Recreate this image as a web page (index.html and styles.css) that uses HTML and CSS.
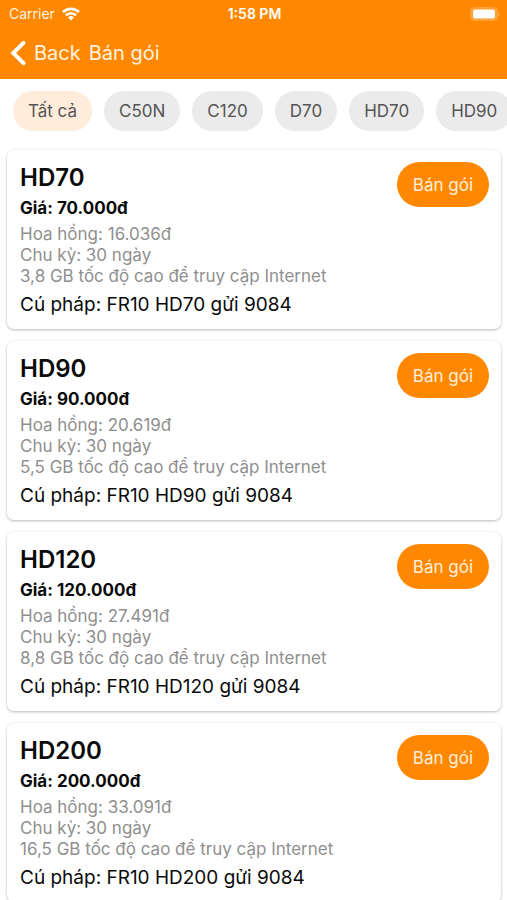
FILE: index.html
```html
<!DOCTYPE html>
<html lang="vi">
<head>
<meta charset="utf-8">
<meta name="viewport" content="width=device-width, initial-scale=1">
<title>Bán gói</title>
<link rel="stylesheet" href="styles.css">
</head>
<body>
<header class="header">
  <div class="status">
    <div class="carrier">
      <span>Carrier</span>
      <svg class="wifi" viewBox="0 0 18 14" aria-hidden="true">
        <path d="M1 5.200a11.300 11.300 0 0 1 16 0M3.900 8.300a7.200 7.200 0 0 1 10.200 0" fill="none" stroke="currentColor" stroke-width="2.6"/>
        <path d="M9 13.4 6.100 10.500a4.100 4.100 0 0 1 5.800 0z" fill="currentColor"/>
      </svg>
    </div>
    <time class="clock">1:58 PM</time>
    <svg class="battery" viewBox="0 0 30 14" aria-hidden="true">
      <rect x="0.5" y="0.5" width="27" height="13" rx="4" fill="#fff" fill-opacity="0.2" stroke="#fff" stroke-opacity="0.15"/>
      <rect x="3" y="2.500" width="22" height="9" rx="2" fill="#fff"/>
      <path d="M28.500 4.800c1.500.8 1.500 3.600 0 4.400z" fill="#fff" fill-opacity="0.4"/>
    </svg>
  </div>
  <nav class="navbar">
    <a class="back" href="#">
      <svg class="chevron" viewBox="0 0 16 26" aria-hidden="true"><path d="M13.500 2.800 3.200 13l10.300 10.200" fill="none" stroke="currentColor" stroke-width="4" stroke-linecap="round" stroke-linejoin="miter"/></svg>
      <span>Back</span>
    </a>
    <h1 class="title">Bán gói</h1>
  </nav>
</header>

<div class="chips">
  <button class="chip chip-active" type="button">Tất cả</button>
  <button class="chip" type="button">C50N</button>
  <button class="chip" type="button">C120</button>
  <button class="chip" type="button">D70</button>
  <button class="chip" type="button">HD70</button>
  <button class="chip" type="button">HD90</button>
</div>

<main class="list">
  <article class="card">
    <div class="info">
      <h2 class="name">HD70</h2>
      <p class="price">Giá: 70.000đ</p>
      <p class="detail">Hoa hồng: 16.036đ</p>
      <p class="detail">Chu kỳ: 30 ngày</p>
      <p class="detail">3,8 GB tốc độ cao để truy cập Internet</p>
      <p class="syntax">Cú pháp: FR10 HD70 gửi 9084</p>
    </div>
    <button class="sell" type="button">Bán gói</button>
  </article>
  <article class="card">
    <div class="info">
      <h2 class="name">HD90</h2>
      <p class="price">Giá: 90.000đ</p>
      <p class="detail">Hoa hồng: 20.619đ</p>
      <p class="detail">Chu kỳ: 30 ngày</p>
      <p class="detail">5,5 GB tốc độ cao để truy cập Internet</p>
      <p class="syntax">Cú pháp: FR10 HD90 gửi 9084</p>
    </div>
    <button class="sell" type="button">Bán gói</button>
  </article>
  <article class="card">
    <div class="info">
      <h2 class="name">HD120</h2>
      <p class="price">Giá: 120.000đ</p>
      <p class="detail">Hoa hồng: 27.491đ</p>
      <p class="detail">Chu kỳ: 30 ngày</p>
      <p class="detail">8,8 GB tốc độ cao để truy cập Internet</p>
      <p class="syntax">Cú pháp: FR10 HD120 gửi 9084</p>
    </div>
    <button class="sell" type="button">Bán gói</button>
  </article>
  <article class="card">
    <div class="info">
      <h2 class="name">HD200</h2>
      <p class="price">Giá: 200.000đ</p>
      <p class="detail">Hoa hồng: 33.091đ</p>
      <p class="detail">Chu kỳ: 30 ngày</p>
      <p class="detail">16,5 GB tốc độ cao để truy cập Internet</p>
      <p class="syntax">Cú pháp: FR10 HD200 gửi 9084</p>
    </div>
    <button class="sell" type="button">Bán gói</button>
  </article>
</main>
</body>
</html>
```
FILE: styles.css
```css
* {
  box-sizing: border-box;
}

body {
  margin: 0;
  height: 100vh;
  display: flex;
  flex-direction: column;
  background: #fff;
  color: #0a0a0a;
  font-family: Inter, "Noto Sans", sans-serif;
}

h1, h2, p {
  margin: 0;
}

button {
  border: 0;
  font-family: inherit;
  cursor: pointer;
}

.header {
  flex: none;
  background: #ff8800;
  color: #fff;
}

.status {
  display: grid;
  grid-template-columns: 1fr auto 1fr;
  align-items: center;
  height: 27px;
  padding: 0 7px 0 9px;
  font-size: 14px;
}

.carrier {
  display: flex;
  align-items: center;
  gap: 7px;
  color: #fff3e0;
}

.wifi {
  width: 18px;
  height: 14px;
  color: #fff;
}

.clock {
  font-size: 14px;
  font-weight: 600;
}

.battery {
  width: 30px;
  height: 14px;
  justify-self: end;
}

.navbar {
  display: flex;
  align-items: center;
  gap: 8px;
  height: 52px;
  padding: 0 10px;
  font-size: 20px;
  color: #fff3e0;
}

.back {
  display: flex;
  align-items: center;
  gap: 8px;
  color: inherit;
  text-decoration: none;
}

.chevron {
  width: 16px;
  height: 26px;
  color: #fff;
}

.title {
  font-size: 20px;
  font-weight: 400;
}

.chips {
  flex: none;
  display: flex;
  gap: 12px;
  padding: 12px 13px 11px;
  overflow-x: auto;
  scrollbar-width: none;
}

.chip {
  flex: none;
  height: 40px;
  padding: 0 15px;
  border-radius: 20px;
  background: #ebebeb;
  color: #555;
  font-size: 17px;
}

.chip-active {
  background: #ffecdb;
}

.list {
  flex: 1;
  min-height: 0;
  display: flex;
  flex-direction: column;
  gap: 12px;
  padding: 8px 6px 12px 7px;
  overflow-y: auto;
  scrollbar-width: none;
}

.card {
  flex: none;
  display: flex;
  align-items: flex-start;
  justify-content: space-between;
  padding: 12px 12px 12px 13px;
  border-radius: 7px;
  box-shadow: 0 1px 3px rgba(0, 0, 0, 0.28);
}

.name {
  font-size: 24px;
  font-weight: 600;
  line-height: 32px;
}

.price {
  margin-bottom: 2px;
  font-size: 17px;
  font-weight: 700;
  line-height: 28px;
}

.detail {
  color: #8f8f8f;
  font-size: 17px;
  line-height: 21px;
}

.syntax {
  margin-top: 5px;
  font-size: 19px;
  line-height: 25px;
}

.sell {
  flex: none;
  height: 45px;
  padding: 0 16px;
  border-radius: 23px;
  background: #ff8800;
  color: #fff0dc;
  font-size: 17px;
}
```
